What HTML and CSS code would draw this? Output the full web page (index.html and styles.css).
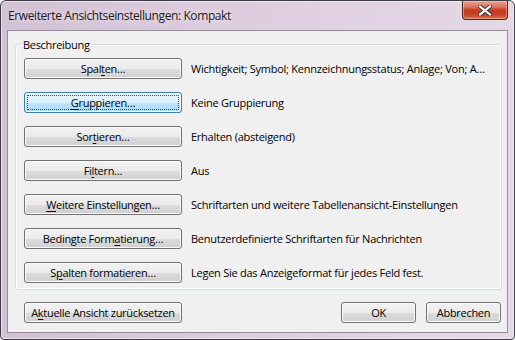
FILE: index.html
```html
<!DOCTYPE html>
<html lang="de">
<head>
<meta charset="utf-8">
<title>Erweiterte Ansichtseinstellungen: Kompakt</title>
<link rel="stylesheet" href="styles.css">
</head>
<body>
<div class="window">
  <div class="titlebar">
    <span class="title">Erweiterte Ansichtseinstellungen: Kompakt</span>
    <div class="close">
      <svg width="14" height="11" viewBox="0 0 14 11">
        <path d="M2 1.5 L12 9.5 M12 1.5 L2 9.5" stroke="#3a3a3a" stroke-width="4.2" stroke-linecap="square" fill="none"/>
        <path d="M2 1.5 L12 9.5 M12 1.5 L2 9.5" stroke="#ffffff" stroke-width="2.2" stroke-linecap="square" fill="none"/>
      </svg>
    </div>
  </div>
  <div class="client">
    <fieldset class="group">
      <legend>Beschreibung</legend>
      <div class="row"><button class="btn">Spal<u>t</u>en…</button><span class="desc">Wichtigkeit; Symbol; Kennzeichnungsstatus; Anlage; Von; A…</span></div>
      <div class="row"><button class="btn focus"><span class="focusrect"><u>G</u>ruppieren…</span></button><span class="desc">Keine Gruppierung</span></div>
      <div class="row"><button class="btn">Sor<u>t</u>ieren…</button><span class="desc">Erhalten (absteigend)</span></div>
      <div class="row"><button class="btn">Fi<u>l</u>tern…</button><span class="desc">Aus</span></div>
      <div class="row"><button class="btn"><u>W</u>eitere Einstellungen…</button><span class="desc">Schriftarten und weitere Tabellenansicht-Einstellungen</span></div>
      <div class="row"><button class="btn">Bedingte Form<u>a</u>tierung…</button><span class="desc">Benutzerdefinierte Schriftarten für Nachrichten</span></div>
      <div class="row"><button class="btn">S<u>p</u>alten formatieren…</button><span class="desc">Legen Sie das Anzeigeformat für jedes Feld fest.</span></div>
    </fieldset>
    <div class="footer">
      <button class="btn">A<u>k</u>tuelle Ansicht zurücksetzen</button>
      <div class="spacer"></div>
      <button class="btn small">OK</button>
      <button class="btn small">Abbrechen</button>
    </div>
  </div>
</div>
</body>
</html>
```
FILE: styles.css
```css
html, body {
  margin: 0;
  padding: 0;
  background: #ffffff;
}
body {
  font-family: "Open Sans", "Noto Sans", sans-serif;
  font-size: 11px;
  color: #000000;
}
.window {
  box-sizing: border-box;
  width: 515px;
  height: 340px;
  border: 1px solid #3d3a45;
  border-radius: 6px 6px 4px 4px;
  background: linear-gradient(to right, #d2c0d5 0%, #dccbde 40%, #e6d8e7 100%);
  box-shadow: inset 0 0 0 1px rgba(255,255,255,0.55);
  padding: 0 6px 6px 6px;
  display: flex;
  flex-direction: column;
}
.titlebar {
  height: 29px;
  display: flex;
  align-items: flex-start;
  justify-content: space-between;
}
.title {
  font-size: 12px;
  letter-spacing: -0.4px;
  margin-top: 6px;
  margin-left: 1px;
  color: #1a1a1a;
  text-shadow: 0 0 6px rgba(255,255,255,0.9);
}
.close {
  width: 46px;
  height: 19px;
  box-sizing: border-box;
  border: 1px solid #5b2018;
  border-top: none;
  border-radius: 0 0 4px 4px;
  background: linear-gradient(#e9a493 0%, #d8705a 35%, #c53c1c 50%, #c23d22 72%, #dc6e52 100%);
  box-shadow: inset 0 0 0 1px rgba(255,220,210,0.45);
  display: flex;
  align-items: center;
  justify-content: center;
}
.close svg {
  display: block;
}
.client {
  flex: 1;
  background: #f0f0f0;
  border: 1px solid #958a98;
  display: flex;
  flex-direction: column;
  padding: 0 5px 8px 7px;
}
.group {
  margin: 6px 0 0 0;
  padding: 6px 8px 6px 8px;
  border: 1px solid #d5dfe5;
  border-radius: 3px;
  box-shadow: inset 0 0 0 1px #ffffff;
  display: flex;
  flex-direction: column;
  gap: 13px;
}
.group legend {
  padding: 0 2px;
  margin-left: -3px;
  line-height: 15px;
  letter-spacing: -0.3px;
}
.row {
  display: flex;
  align-items: center;
  gap: 9px;
}
.btn {
  box-sizing: border-box;
  width: 158px;
  height: 21px;
  padding: 0;
  border: 1px solid #707070;
  border-radius: 3px;
  background: linear-gradient(#f2f2f2 0%, #ebebeb 50%, #dddddd 51%, #cfcfcf 100%);
  box-shadow: inset 0 0 0 1px #fcfcfc;
  font-family: inherit;
  font-size: 11px;
  letter-spacing: -0.3px;
  color: #000000;
  display: flex;
  align-items: center;
  justify-content: center;
}
.btn u {
  text-decoration: underline;
  text-underline-offset: 2px;
}
.btn.focus {
  border-color: #3c7fb1;
  background: linear-gradient(#eaf6fd 0%, #d9f0fc 50%, #bee6fd 51%, #a7d9f5 100%);
  box-shadow: inset 0 0 0 1px #ffffff;
  padding: 2px;
}
.focusrect {
  flex: 1;
  align-self: stretch;
  display: flex;
  align-items: center;
  justify-content: center;
  border: 1px dotted #4a4a4a;
}
.desc {
  letter-spacing: -0.25px;
  white-space: nowrap;
}
.footer {
  display: flex;
  align-items: center;
  margin-top: 12px;
  padding-left: 9px;
  padding-right: 1px;
  gap: 10px;
}
.spacer {
  flex: 1;
}
.btn.small {
  width: 75px;
}
```
